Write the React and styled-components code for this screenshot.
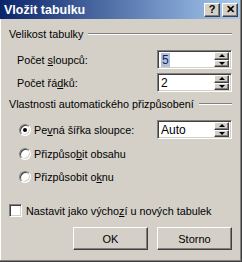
import React from "react";
import styled, { createGlobalStyle } from "styled-components";

const GlobalStyle = createGlobalStyle`
  html, body {
    margin: 0;
    padding: 0;
    background: #d4d0c8;
  }
  body {
    font-family: "Liberation Sans", Arial, sans-serif;
    font-size: 10.8px;
    color: #000;
  }
`;

const Window = styled.div`
  width: 242px;
  height: 262px;
  box-sizing: border-box;
  background: #d4d0c8;
  border-right: 1px solid #404040;
  border-bottom: 1px solid #404040;
  box-shadow: inset -1px -1px #808080, inset 1px 0 #fff;
  display: flex;
  flex-direction: column;
`;

const TitleBar = styled.div`
  height: 19px;
  margin-right: 1px;
  padding: 0 2px 0 4px;
  display: flex;
  align-items: center;
  background: linear-gradient(to right, #0a246a, #a6caf0);
`;

const Title = styled.div`
  flex: 1;
  color: #fff;
  font-weight: 700;
  font-size: 12.5px;
`;

const TitleButton = styled.div`
  width: 16px;
  height: 14px;
  box-sizing: border-box;
  margin-left: ${(p) => (p.gap ? "2px" : "0")};
  background: #d4d0c8;
  border: 1px solid;
  border-color: #fff #404040 #404040 #fff;
  box-shadow: inset -1px -1px #808080;
  display: flex;
  align-items: center;
  justify-content: center;
  font-weight: 700;
  font-size: 11px;
  line-height: 1;
`;

const Body = styled.div`
  padding: 0 9px 0 9px;
  display: flex;
  flex-direction: column;
`;

const Heading = styled.div`
  display: flex;
  align-items: center;
  height: 14px;
  margin-top: ${(p) => p.mt}px;
  gap: 5px;
`;

const Line = styled.div`
  flex: 1;
  height: 0;
  border-top: 1px solid #808080;
  border-bottom: 1px solid #fff;
`;

const Row = styled.div`
  display: flex;
  align-items: center;
  height: 19px;
  margin-top: ${(p) => p.mt}px;
  padding-left: ${(p) => p.indent}px;
`;

const Label = styled.div`
  flex: 1;
  display: flex;
  align-items: center;
`;

const Field = styled.div`
  width: 75px;
  height: 19px;
  box-sizing: border-box;
  background: #fff;
  border: 1px solid;
  border-color: #808080 #fff #fff #808080;
  box-shadow: inset 1px 1px #404040, inset -1px -1px #d4d0c8;
  display: flex;
  align-items: center;
  padding: 2px 2px 2px 3px;
`;

const Value = styled.span`
  flex: 1;
  font-size: 12px;
`;

const Selected = styled.span`
  background: #b4c0d8;
  color: #0a246a;
  padding: 0 1px;
`;

const Spin = styled.div`
  width: 15px;
  height: 15px;
  display: flex;
  flex-direction: column;
`;

const SpinButton = styled.div`
  flex: 1;
  box-sizing: border-box;
  background: #d4d0c8;
  border: 1px solid;
  border-color: #fff #404040 #404040 #fff;
  box-shadow: inset -1px -1px #808080;
  display: flex;
  align-items: center;
  justify-content: center;
`;

const Arrow = styled.div`
  width: 0;
  height: 0;
  border-left: 3px solid transparent;
  border-right: 3px solid transparent;
  ${(p) =>
    p.up ? "border-bottom: 3px solid #000;" : "border-top: 3px solid #000;"}
`;

const Radio = styled.div`
  width: 12px;
  height: 12px;
  box-sizing: border-box;
  border-radius: 50%;
  background: #fff;
  border: 1px solid;
  border-color: #808080 #fff #fff #808080;
  box-shadow: inset 1px 1px #404040, inset -1px -1px #d4d0c8;
  display: flex;
  align-items: center;
  justify-content: center;
  margin-right: 3px;
  &::after {
    content: "";
    width: 4px;
    height: 4px;
    border-radius: 50%;
    background: ${(p) => (p.checked ? "#000" : "transparent")};
  }
`;

const Check = styled.div`
  width: 13px;
  height: 13px;
  box-sizing: border-box;
  background: #fff;
  border: 1px solid;
  border-color: #808080 #fff #fff #808080;
  box-shadow: inset 1px 1px #404040, inset -1px -1px #d4d0c8;
  margin-right: 4px;
`;

const Buttons = styled.div`
  display: flex;
  justify-content: flex-end;
  gap: 9px;
  margin-top: 7px;
`;

const Button = styled.div`
  width: 75px;
  height: 23px;
  box-sizing: border-box;
  background: #d4d0c8;
  border: 1px solid;
  border-color: #fff #404040 #404040 #fff;
  box-shadow: inset -1px -1px #808080;
  display: flex;
  align-items: center;
  justify-content: center;
  font-size: 11px;
`;

const Spinner = () => (
  <Spin>
    <SpinButton>
      <Arrow up />
    </SpinButton>
    <SpinButton>
      <Arrow />
    </SpinButton>
  </Spin>
);

export default function App() {
  return (
    <>
      <GlobalStyle />
      <Window>
        <TitleBar>
          <Title>Vložit tabulku</Title>
          <TitleButton>?</TitleButton>
          <TitleButton gap>✕</TitleButton>
        </TitleBar>
        <Body>
          <Heading mt={8}>
            <span>Velikost tabulky</span>
            <Line />
          </Heading>
          <Row mt={9} indent={8}>
            <Label>
              <span>
                Počet <u>s</u>loupců:
              </span>
            </Label>
            <Field>
              <Value>
                <Selected>5</Selected>
              </Value>
              <Spinner />
            </Field>
          </Row>
          <Row mt={4} indent={8}>
            <Label>
              <span>
                Počet řá<u>d</u>ků:
              </span>
            </Label>
            <Field>
              <Value>2</Value>
              <Spinner />
            </Field>
          </Row>
          <Heading mt={5}>
            <span>Vlastnosti automatického přizpůsobení</span>
            <Line />
          </Heading>
          <Row mt={9} indent={10}>
            <Label>
              <Radio checked />
              <span>
                Pe<u>v</u>ná šířka sloupce:
              </span>
            </Label>
            <Field>
              <Value>Auto</Value>
              <Spinner />
            </Field>
          </Row>
          <Row mt={5} indent={10}>
            <Label>
              <Radio />
              <span>
                Přizpůso<u>b</u>it obsahu
              </span>
            </Label>
          </Row>
          <Row mt={4} indent={10}>
            <Label>
              <Radio />
              <span>
                Přizpůsobit o<u>k</u>nu
              </span>
            </Label>
          </Row>
          <Row mt={15} indent={0}>
            <Label>
              <Check />
              <span>
                Nastavit jako výcho<u>z</u>í u nových tabulek
              </span>
            </Label>
          </Row>
          <Buttons>
            <Button>OK</Button>
            <Button>Storno</Button>
          </Buttons>
        </Body>
      </Window>
    </>
  );
}
